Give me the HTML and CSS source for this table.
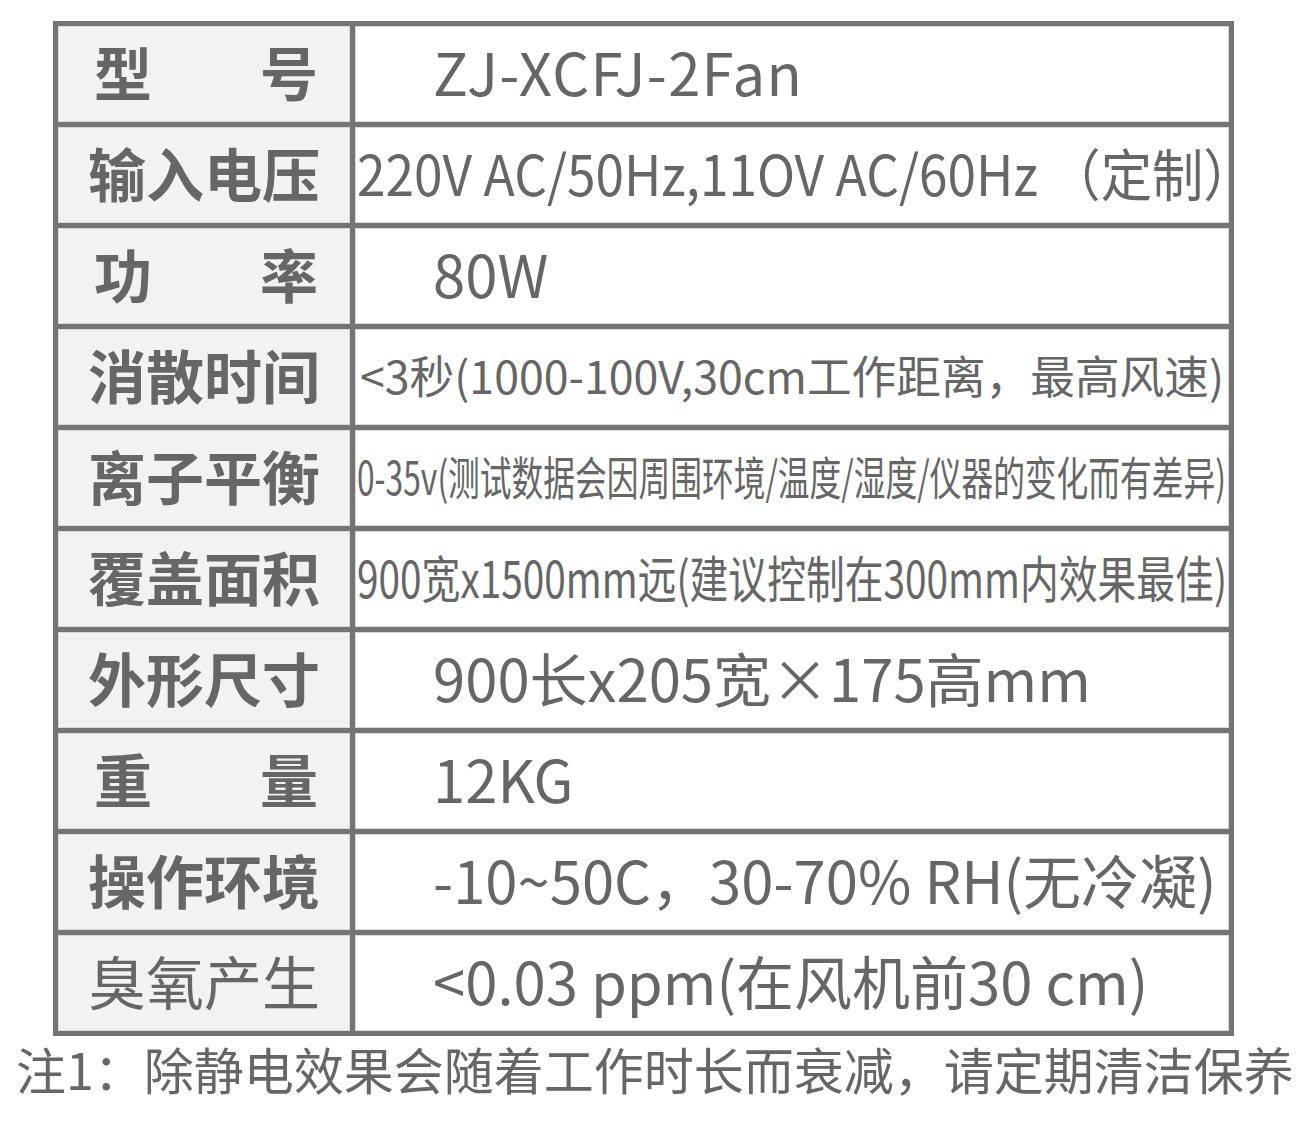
FILE: index.html
```html
<!DOCTYPE html>
<html lang="zh-CN">
<head>
<meta charset="utf-8">
<title>ZJ-XCFJ-2Fan 参数</title>
<link rel="stylesheet" href="styles.css">
</head>
<body>
<div class="sheet">
  <div class="spec">
    <div class="row">
      <div class="key"><span class="label split"><span>型</span><span>号</span></span></div>
      <div class="val indent"><span class="txt wide">ZJ-XCFJ-2Fan</span></div>
    </div>
    <div class="row">
      <div class="key"><span class="label">输入电压</span></div>
      <div class="val"><span class="txt fit s56" data-fit="872">220V AC/50Hz,11OV AC/60Hz （定制<span class="halt">）</span></span></div>
    </div>
    <div class="row">
      <div class="key"><span class="label split"><span>功</span><span>率</span></span></div>
      <div class="val indent"><span class="txt">80W</span></div>
    </div>
    <div class="row">
      <div class="key"><span class="label">消散时间</span></div>
      <div class="val"><span class="txt fit s45 ml" data-fit="864">&lt;3秒(1000-100V,30cm工作距离，最高风速)</span></div>
    </div>
    <div class="row">
      <div class="key"><span class="label">离子平衡</span></div>
      <div class="val"><span class="txt fit s46" data-fit="869">0-35v(测试数据会因周围环境/温度/湿度/仪器的变化而有差异)</span></div>
    </div>
    <div class="row">
      <div class="key"><span class="label">覆盖面积</span></div>
      <div class="val"><span class="txt fit s50" data-fit="870">900宽x1500mm远(建议控制在300mm内效果最佳)</span></div>
    </div>
    <div class="row">
      <div class="key"><span class="label">外形尺寸</span></div>
      <div class="val indent"><span class="txt">900长x205宽×175高mm</span></div>
    </div>
    <div class="row">
      <div class="key"><span class="label split"><span>重</span><span>量</span></span></div>
      <div class="val indent"><span class="txt">12KG</span></div>
    </div>
    <div class="row">
      <div class="key"><span class="label">操作环境</span></div>
      <div class="val indent"><span class="txt">-10~50C，30-70% RH(无冷凝)</span></div>
    </div>
    <div class="row">
      <div class="key"><span class="label light">臭氧产生</span></div>
      <div class="val indent"><span class="txt">&lt;0.03 ppm(在风机前30 cm)</span></div>
    </div>
  </div>
  <p class="note">注1：除静电效果会随着工作时长而衰减，请定期清洁保养</p>
</div>
<script src="script.js"></script>
</body>
</html>
```
FILE: styles.css
```css
html, body {
  margin: 0;
  padding: 0;
  background: #ffffff;
}
body {
  font-family: "Noto Sans CJK SC", "Noto Sans", sans-serif;
  color: #666666;
}
.sheet {
  padding: 21px 0 0 53px;
  width: 1181px;
}
.spec {
  border-top: 5px solid #747474;
  border-left: 5px solid #747474;
  width: 1176px;
}
.row {
  display: grid;
  grid-template-columns: 297px 879px;
  height: 101px;
}
.key, .val {
  border-right: 5px solid #747474;
  border-bottom: 5px solid #747474;
  box-shadow: inset 0 0 0 1px #d8d8d8;
  display: flex;
  align-items: center;
  overflow: hidden;
  padding-bottom: 6px;
}
.key {
  background: #f2f2f2;
  justify-content: center;
}
.val {
  background: #ffffff;
  padding-left: 2px;
}
.val.indent {
  padding-left: 78px;
}
.label {
  width: 232px;
  font-size: 58px;
  font-weight: 700;
  line-height: 1;
  white-space: nowrap;
  text-align: center;
}
.label.light {
  font-weight: 400;
}
.label.split {
  display: flex;
  justify-content: space-between;
  width: 224px;
  padding-left: 4px;
}
.txt {
  display: inline-block;
  font-size: 58px;
  line-height: 1;
  white-space: nowrap;
  transform-origin: left center;
}
.halt {
  font-feature-settings: "halt" 1;
}
.txt.wide { letter-spacing: 1.2px; }
.txt.s56 { font-size: 56px; }
.txt.s45 { font-size: 45px; }
.txt.s46 { font-size: 46px; }
.txt.s50 { font-size: 50px; }
.txt.ml { margin-left: 3px; }
.note {
  margin: 2px 0 0 -37px;
  font-size: 50px;
  line-height: 1.2;
  white-space: nowrap;
  color: #666666;
}
```
FILE: script.js
```js
document.querySelectorAll('[data-fit]').forEach(function (el) {
  var target = parseFloat(el.getAttribute('data-fit'));
  var w = el.getBoundingClientRect().width;
  if (w > 0) {
    el.style.transform = 'scaleX(' + (target / w) + ')';
  }
});
```
